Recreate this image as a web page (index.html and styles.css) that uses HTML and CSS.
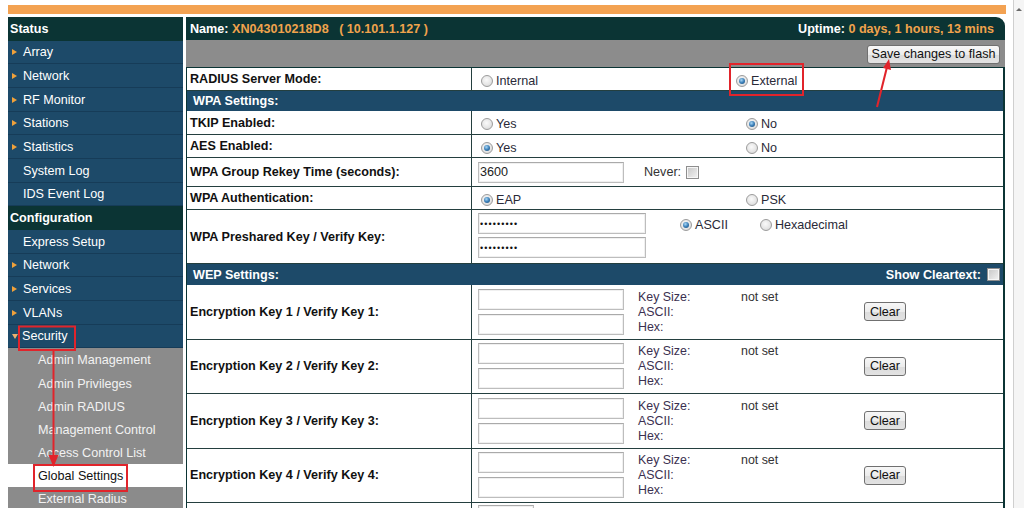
FILE: index.html
```html
<!DOCTYPE html>
<html>
<head>
<meta charset="utf-8">
<title>Global Settings</title>
<link rel="stylesheet" href="styles.css">
</head>
<body>
<div class="page">
  <div class="content">
    <div class="topbar"></div>
    <div class="layout">
      <nav class="sidebar">
        <div class="nav-head">Status</div>
        <div class="nav-item arrow"><span class="tri"></span>Array</div>
        <div class="nav-item arrow"><span class="tri"></span>Network</div>
        <div class="nav-item arrow"><span class="tri"></span>RF Monitor</div>
        <div class="nav-item arrow"><span class="tri"></span>Stations</div>
        <div class="nav-item arrow"><span class="tri"></span>Statistics</div>
        <div class="nav-item">System Log</div>
        <div class="nav-item">IDS Event Log</div>
        <div class="nav-head">Configuration</div>
        <div class="nav-item">Express Setup</div>
        <div class="nav-item arrow"><span class="tri"></span>Network</div>
        <div class="nav-item arrow"><span class="tri"></span>Services</div>
        <div class="nav-item arrow"><span class="tri"></span>VLANs</div>
        <div class="nav-item arrow open"><span class="tri down"></span>Security</div>
        <div class="sub-item">Admin Management</div>
        <div class="sub-item">Admin Privileges</div>
        <div class="sub-item">Admin RADIUS</div>
        <div class="sub-item">Management Control</div>
        <div class="sub-item">Access Control List</div>
        <div class="sub-item active">Global Settings</div>
        <div class="sub-item">External Radius</div>
      </nav>
      <main class="main">
        <div class="title-bar">
          <span>Name: <span class="hl">XN043010218D8&nbsp;&nbsp;&nbsp;( 10.101.1.127 )</span></span>
          <span>Uptime: <span class="hl">0 days, 1 hours, 13 mins</span></span>
        </div>
        <div class="toolbar"><button class="btn save">Save changes to flash</button></div>
        <div class="form">
          <div class="row h23b">
            <div class="label">RADIUS Server Mode:</div>
            <div class="value opts">
              <span class="opt first"><span class="radio"></span>Internal</span>
              <span class="opt"><span class="radio on"></span>External</span>
            </div>
          </div>
          <div class="section h20">WPA Settings:</div>
          <div class="row h24">
            <div class="label">TKIP Enabled:</div>
            <div class="value opts">
              <span class="opt first wide"><span class="radio"></span>Yes</span>
              <span class="opt"><span class="radio on"></span>No</span>
            </div>
          </div>
          <div class="row h23">
            <div class="label">AES Enabled:</div>
            <div class="value opts">
              <span class="opt first wide"><span class="radio on"></span>Yes</span>
              <span class="opt"><span class="radio"></span>No</span>
            </div>
          </div>
          <div class="row h29">
            <div class="label">WPA Group Rekey Time (seconds):</div>
            <div class="value">
              <input class="txt" type="text" value="3600">
              <span class="never">Never:</span>
              <span class="check"></span>
            </div>
          </div>
          <div class="row h23">
            <div class="label">WPA Authentication:</div>
            <div class="value opts">
              <span class="opt first wide"><span class="radio on"></span>EAP</span>
              <span class="opt"><span class="radio"></span>PSK</span>
            </div>
          </div>
          <div class="row h54">
            <div class="label">WPA Preshared Key / Verify Key:</div>
            <div class="value top">
              <div class="stack">
                <input class="txt wide pw" type="text" value="•••••••••">
                <input class="txt wide pw" type="text" value="•••••••••">
              </div>
              <div class="enc">
                <span class="opt"><span class="radio on"></span>ASCII</span>
                <span class="opt hex"><span class="radio"></span>Hexadecimal</span>
              </div>
            </div>
          </div>
          <div class="section h21">
            <span>WEP Settings:</span>
            <span class="show">Show Cleartext: <span class="check"></span></span>
          </div>
          <div class="row hkey">
            <div class="label">Encryption Key 1 / Verify Key 1:</div>
            <div class="value">
              <div class="stack gap4"><input class="txt" type="text"><input class="txt" type="text"></div>
              <div class="keyinfo"><span>Key Size:</span><span class="notset">not set</span><span>ASCII:</span><span></span><span>Hex:</span><span></span></div>
              <button class="btn clear">Clear</button>
            </div>
          </div>
          <div class="row hkey">
            <div class="label">Encryption Key 2 / Verify Key 2:</div>
            <div class="value">
              <div class="stack gap4"><input class="txt" type="text"><input class="txt" type="text"></div>
              <div class="keyinfo"><span>Key Size:</span><span class="notset">not set</span><span>ASCII:</span><span></span><span>Hex:</span><span></span></div>
              <button class="btn clear">Clear</button>
            </div>
          </div>
          <div class="row hkey">
            <div class="label">Encryption Key 3 / Verify Key 3:</div>
            <div class="value">
              <div class="stack gap4"><input class="txt" type="text"><input class="txt" type="text"></div>
              <div class="keyinfo"><span>Key Size:</span><span class="notset">not set</span><span>ASCII:</span><span></span><span>Hex:</span><span></span></div>
              <button class="btn clear">Clear</button>
            </div>
          </div>
          <div class="row hkey">
            <div class="label">Encryption Key 4 / Verify Key 4:</div>
            <div class="value">
              <div class="stack gap4"><input class="txt" type="text"><input class="txt" type="text"></div>
              <div class="keyinfo"><span>Key Size:</span><span class="notset">not set</span><span>ASCII:</span><span></span><span>Hex:</span><span></span></div>
              <button class="btn clear">Clear</button>
            </div>
          </div>
          <div class="row hlast">
            <div class="label"></div>
            <div class="value top2"><input class="txt small" type="text"></div>
          </div>
        </div>
      </main>
    </div>
  </div>
  <div class="scrollbar"><span class="sb-arrow"></span></div>
  <svg class="marks" width="1024" height="508" viewBox="0 0 1024 508">
    <rect x="19" y="326.5" width="56" height="23.5" fill="none" stroke="#e1242b" stroke-width="2"/>
    <line x1="53.5" y1="351" x2="53.5" y2="456" stroke="#e1242b" stroke-width="2"/>
    <polygon points="48.5,455 58.5,455 53.5,467" fill="#e1242b"/>
    <rect x="34" y="465" width="93" height="26" fill="none" stroke="#e1242b" stroke-width="2"/>
    <rect x="730" y="64" width="73" height="31" fill="none" stroke="#e1242b" stroke-width="2"/>
    <line x1="877" y1="107" x2="887" y2="67" stroke="#e1242b" stroke-width="2"/>
    <polygon points="889,59 891,70 883,68" fill="#e1242b"/>
  </svg>
</div>
</body>
</html>
```
FILE: styles.css
```css
* { box-sizing: border-box; }
html, body { margin: 0; padding: 0; background: #fff; }
body {
  font-family: "Liberation Sans", Arial, sans-serif;
  font-size: 12.6px;
  color: #222;
  overflow: hidden;
}
.page { display: flex; height: 508px; position: relative; overflow: hidden; }
.content { width: 1006px; flex: none; padding: 5px 0 0 8px; }
.topbar { height: 9px; background: #f3a252; }
.layout { display: flex; gap: 3px; margin-top: 3px; }

/* sidebar */
.sidebar { width: 175px; flex: none; }
.nav-head {
  height: 23.5px; line-height: 24px;
  background: #0b3434; color: #fff; font-weight: bold;
  padding-left: 2px;
}
.nav-item {
  height: 23.7px; display: flex; align-items: center;
  background: #1d4a69; color: #fff;
  padding-left: 15px; padding-top: 1px;
  border-bottom: 1px solid #163c58;
}
.nav-item.arrow { padding-left: 4px; }
.tri {
  width: 0; height: 0; flex: none;
  border-left: 5px solid #f0a13a;
  border-top: 3.5px solid transparent;
  border-bottom: 3.5px solid transparent;
  margin-right: 6px;
}
.tri.down {
  border-left: 3.5px solid transparent;
  border-right: 3.5px solid transparent;
  border-top: 5px solid #ecb06e;
  border-bottom: 0;
  margin-right: 4px;
}
.sub-item {
  height: 23.2px; display: flex; align-items: center;
  background: #8b8b8b; color: #f2f2f2;
  padding-left: 30px; padding-top: 1px;
}
.sub-item.active { background: #fff; color: #111; }

/* main */
.main { width: 819px; flex: none; }
.title-bar {
  height: 23px; background: #0b3434; color: #fff; font-weight: bold;
  border-top-right-radius: 9px;
  display: flex; justify-content: space-between; align-items: center;
  padding: 1px 11px 0 4px;
}
.hl { color: #f0a34c; }
.toolbar {
  height: 27px; background: #8c8c8c;
  display: flex; justify-content: flex-end; align-items: center;
  padding-right: 5px;
}
.btn {
  font-family: "Liberation Sans", Arial, sans-serif;
  font-size: 12.6px; color: #111;
  height: 19px; padding: 0;
  border: 1px solid #707070; border-radius: 3px;
  background: linear-gradient(#f7f7f7 0%, #ececec 50%, #dcdcdc 51%, #e2e2e2 100%);
}
.btn.save { width: 133px; margin-top: 1px; }
.btn.clear { width: 42px; }

.form {
  border-top: 1px solid #0b3434;
  border-left: 1px solid #0b3434;
  border-right: 2px solid #0b3434;
}
.row { display: flex; border-bottom: 1px solid #243f3f; }
.label {
  width: 285px; flex: none;
  border-right: 1px solid #243f3f;
  display: flex; align-items: center;
  padding-left: 3px;
  font-weight: bold; color: #111;
}
.value { flex: 1; display: flex; align-items: center; padding-left: 6px; }
.value.opts { padding-left: 9px; padding-top: 3px; }
.value.top { align-items: flex-start; padding-top: 3px; }
.value.top2 { align-items: flex-start; padding-top: 2px; }

.h23b { height: 23px; }
.h23 { height: 23px; }
.h24 { height: 24px; }
.h29 { height: 29px; }
.h54 { height: 54px; }
.hkey { height: 54.5px; }
.hlast { height: 30px; }

.section {
  background: #1d4a69; color: #fff; font-weight: bold;
  display: flex; align-items: center; justify-content: space-between;
  padding: 0 3px 0 6px;
}
.h20 { height: 20px; }
.h21 { height: 21px; }
.show { display: inline-flex; align-items: center; gap: 6px; }

.opt { display: inline-flex; align-items: center; gap: 3px; color: #2a2a38; }
.opt.first { width: 255px; }
.opt.first.wide { width: 265px; }
.radio {
  width: 12px; height: 12px; flex: none;
  border-radius: 50%;
  border: 1px solid #9c9c9c;
  background: radial-gradient(circle at 45% 40%, #fafafa 0%, #e6e6e6 55%, #cfcfcf 100%);
  display: inline-flex; align-items: center; justify-content: center;
}
.radio.on::after {
  content: "";
  width: 6px; height: 6px; border-radius: 50%;
  background: radial-gradient(circle at 40% 35%, #a9d8f6 0%, #3b7fb8 50%, #17466f 100%);
}
.check {
  width: 13px; height: 13px; flex: none; display: inline-block;
  border: 1px solid #8e8e8e;
  background: linear-gradient(135deg, #c6c6c6, #f3f3f3);
  box-shadow: inset 0 0 0 1px #f6f6f6;
}

.txt {
  width: 146px; height: 21px;
  border: 1px solid #bdbdbd; border-top-color: #aaaaaa;
  box-shadow: inset 0 0 0 1px #f0f0f0;
  font-family: "Liberation Sans", Arial, sans-serif;
  font-size: 12.6px; color: #222;
  padding: 0 1px; margin: 0;
  background: #fff; outline: none;
}
.txt.wide { width: 168px; }
.txt.pw { font-size: 9px; letter-spacing: 1.1px; color: #111; }
.txt.small { width: 56px; }
.never { margin-left: 20px; margin-right: 5px; color: #333; }

.stack { display: flex; flex-direction: column; gap: 3px; }
.stack.gap4 { gap: 4px; }
.enc { display: flex; align-items: center; height: 21px; margin-left: 34px; padding-top: 2px; }
.enc .hex { margin-left: 32px; }

.keyinfo {
  width: 226px; margin-left: 14px;
  display: grid; grid-template-columns: 103px auto;
  line-height: 15px; font-size: 12.4px; color: #3b3050;
  padding-top: 1px;
}
.notset { color: #333; }

.scrollbar {
  margin-left: 7px; flex: 1;
  border-left: 1px solid #cfcfcf;
  background: #f5f5f5;
  display: flex; justify-content: center;
  padding-top: 8px;
}
.sb-arrow {
  width: 0; height: 0;
  border-left: 3px solid transparent; border-right: 3px solid transparent;
  border-bottom: 3px solid #6a6a6a;
}
.marks { position: absolute; left: 0; top: 0; pointer-events: none; }
```
